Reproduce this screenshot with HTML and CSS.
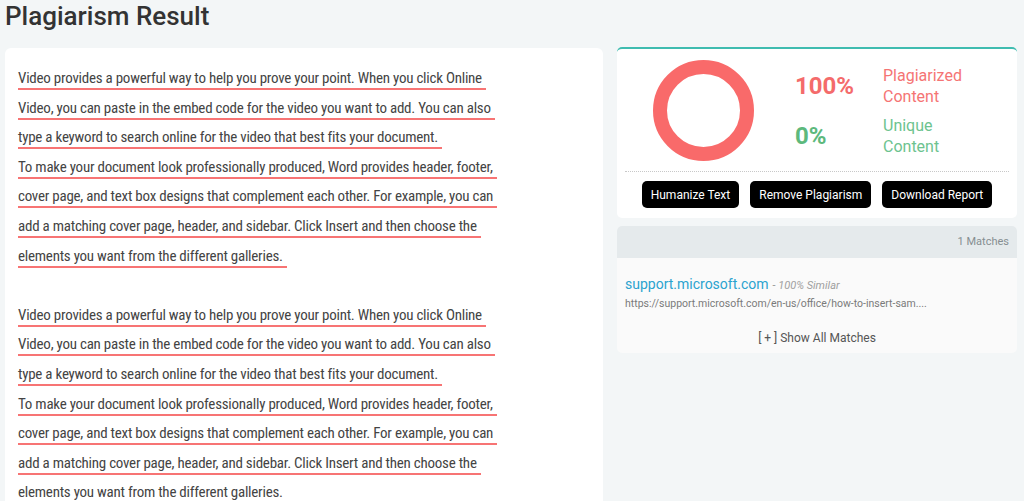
FILE: index.html
```html
<!DOCTYPE html>
<html lang="en">
<head>
    <meta charset="utf-8">
    <meta name="viewport" content="width=device-width, initial-scale=1.0">
    <title>Plagiarism Result</title>
    <link rel="stylesheet" href="styles.css">
</head>
<body>
    <h1>Plagiarism Result</h1>

    <div class="result-layout">
        <div class="text-card">
            <p class="checked-text">
                <span class="match">Video provides a powerful way to help you prove your point. When you click Online Video, you can paste in the embed code for the video you want to add. You can also type a keyword to search online for the video that best fits your document.</span><br>
                <span class="match">To make your document look professionally produced, Word provides header, footer, cover page, and text box designs that complement each other. For example, you can add a matching cover page, header, and sidebar. Click Insert and then choose the elements you want from the different galleries.</span>
            </p>
            <p class="checked-text">
                <span class="match">Video provides a powerful way to help you prove your point. When you click Online Video, you can paste in the embed code for the video you want to add. You can also type a keyword to search online for the video that best fits your document.</span><br>
                <span class="match">To make your document look professionally produced, Word provides header, footer, cover page, and text box designs that complement each other. For example, you can add a matching cover page, header, and sidebar. Click Insert and then choose the elements you want from the different galleries.</span>
            </p>
        </div>

        <div class="side-panel">
            <div class="score-card">
                <div class="score-top">
                    <div class="donut"></div>
                    <div class="score-stats">
                        <div class="stat-row plag">
                            <span class="stat-value">100%</span>
                            <span class="stat-label">Plagiarized<br>Content</span>
                        </div>
                        <div class="stat-row unique">
                            <span class="stat-value">0%</span>
                            <span class="stat-label">Unique<br>Content</span>
                        </div>
                    </div>
                </div>
                <div class="score-actions">
                    <button>Humanize Text</button>
                    <button>Remove Plagiarism</button>
                    <button>Download Report</button>
                </div>
            </div>

            <div class="matches-card">
                <div class="matches-head">1 Matches</div>
                <div class="match-item">
                    <a class="match-site" href="#">support.microsoft.com</a>
                    <span class="match-similar">- 100% Similar</span>
                    <div class="match-url">https://support.microsoft.com/en-us/office/how-to-insert-sam....</div>
                </div>
                <div class="show-all">[ + ] Show All Matches</div>
            </div>
        </div>
    </div>
</body>
</html>
```

FILE: styles.css
```css
body {
    margin: 0;
    background: #f3f6f7;
    font-family: Roboto, "Liberation Sans", sans-serif;
    color: #333;
    overflow: hidden;
}
h1 {
    margin: 0;
    padding: 0 5px;
    font-size: 26px;
    font-weight: 500;
    line-height: 32px;
    color: #333;
}
.result-layout {
    display: flex;
    align-items: flex-start;
    gap: 14px;
    padding: 16px 7px 0 5px;
}
.text-card {
    width: 598px;
    flex: none;
    box-sizing: border-box;
    background: #fff;
    border-radius: 6px;
    padding: 16px 95px 0 13px;
    height: 480px;
}
.checked-text {
    margin: 0 0 29.6px;
    font-family: "Roboto Condensed", "Liberation Sans Narrow", Roboto, sans-serif;
    font-stretch: 81%;
    font-size: 15px;
    letter-spacing: -0.24px;
    line-height: 29.6px;
    color: #444;
}
.match {
    border-bottom: 2px solid #f77474;
    padding: 0 4px 1px 0;
    -webkit-box-decoration-break: clone;
    box-decoration-break: clone;
}
.side-panel {
    width: 400px;
    flex: none;
    margin-top: -1px;
}
.score-card {
    background: #fff;
    border-top: 2px solid #3fbcb0;
    border-radius: 5px;
    padding: 11px 8px 10px;
}
.score-top {
    display: flex;
    align-items: center;
    padding-left: 28px;
}
.donut {
    width: 101px;
    height: 101px;
    box-sizing: border-box;
    border: 14px solid #f96a6a;
    border-radius: 50%;
}
.score-stats {
    margin-left: 41px;
}
.stat-row {
    display: flex;
    align-items: center;
    height: 42px;
}
.stat-row + .stat-row {
    margin-top: 8px;
}
.stat-value {
    width: 88px;
    font-size: 24px;
    font-weight: 700;
}
.stat-label {
    font-size: 16px;
    line-height: 21px;
}
.plag .stat-value { color: #f46b6b; }
.plag .stat-label { color: #f57474; }
.unique .stat-value { color: #5db97c; }
.unique .stat-label { color: #6dc38f; }
.score-actions {
    display: flex;
    justify-content: center;
    gap: 11px;
    margin-top: 10px;
    padding-top: 9px;
    border-top: 1px dotted #c8c8c8;
}
.score-actions button {
    height: 27px;
    padding: 0 9px;
    border: none;
    border-radius: 5px;
    background: #000;
    color: #fff;
    font-family: Roboto, "Liberation Sans", sans-serif;
    font-size: 12px;
}
.matches-card {
    margin-top: 8px;
    background: #fafafa;
    border-radius: 5px;
    overflow: hidden;
}
.matches-head {
    background: #e5eaec;
    height: 32px;
    line-height: 32px;
    text-align: right;
    padding-right: 8px;
    font-size: 11px;
    color: #868e91;
}
.match-item {
    padding: 16px 8px 0;
}
.match-site {
    font-size: 14px;
    color: #2ba3cf;
    text-decoration: none;
}
.match-similar {
    font-size: 11px;
    font-style: italic;
    color: #a0a0a0;
}
.match-url {
    margin-top: 4px;
    font-size: 10.5px;
    color: #7a7a7a;
}
.show-all {
    text-align: center;
    font-size: 12px;
    color: #555;
    padding: 21px 0 8px;
}
```
